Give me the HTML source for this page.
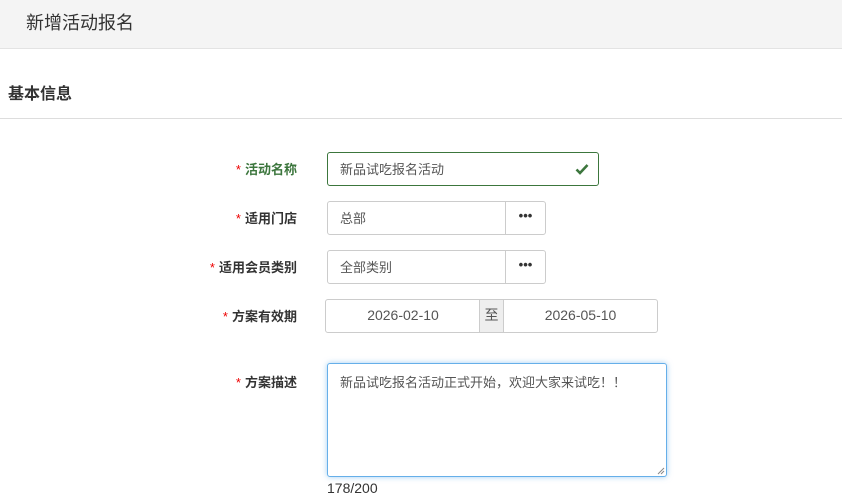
<!DOCTYPE html>
<html><head><meta charset="utf-8"><style>
*{box-sizing:border-box;margin:0;padding:0}
body{width:842px;height:491px;overflow:hidden;background:#fff;font-family:"Liberation Sans","Noto Sans CJK SC",sans-serif;color:#333;position:relative}
.hd{position:absolute;left:0;top:0;width:842px;height:49px;background:#f4f4f4;border-bottom:1px solid #e3e3e3}
.hd span{position:absolute;left:26px;top:9px;font-size:18px;color:#333}
.sec{position:absolute;left:8px;top:80px;font-size:16px;font-weight:bold;color:#333}
.line{position:absolute;left:0;top:118px;width:842px;height:1px;background:#ddd}
.lb{position:absolute;right:545px;font-size:13px;font-weight:bold;color:#333;white-space:nowrap}
.lb i{color:#e00;font-style:normal;font-weight:normal;margin-right:4px}
.box{position:absolute;border:1px solid #ccc;border-radius:3px;font-size:13px;color:#555;background:#fff}
.t{position:absolute;left:12px;top:6px}
.btn{position:absolute;right:0;top:0;bottom:0;width:40px;border-left:1px solid #ccc;text-align:center;font-weight:bold;font-size:13px;line-height:28px;color:#333}
</style></head><body>
<div class="hd"><span>新增活动报名</span></div>
<div class="sec">基本信息</div>
<div class="line"></div>

<div class="lb" style="top:159px;color:#3c763d"><i>*</i>活动名称</div>
<div class="box" style="left:327px;top:152px;width:272px;height:34px;border-color:#3c763d"><span class="t">新品试吃报名活动</span>
<svg style="position:absolute;right:9px;top:10px" width="14" height="12" viewBox="0 0 14 12"><path d="M1.5 6.5L5 10L12.5 2" stroke="#3c763d" stroke-width="2.6" fill="none"/></svg></div>

<div class="lb" style="top:208px"><i>*</i>适用门店</div>
<div class="box" style="left:327px;top:201px;width:219px;height:34px"><span class="t">总部</span><div class="btn">•••</div></div>

<div class="lb" style="top:257px"><i>*</i>适用会员类别</div>
<div class="box" style="left:327px;top:250px;width:219px;height:34px"><span class="t">全部类别</span><div class="btn">•••</div></div>

<div class="lb" style="top:306px;right:545px"><i>*</i>方案有效期</div>
<div class="box" style="left:325px;top:299px;width:333px;height:34px;overflow:hidden;font-size:14px">
<div style="position:absolute;left:0;width:154px;top:7px;text-align:center">2026-02-10</div>
<div style="position:absolute;left:153px;width:25px;top:0;bottom:0;background:#eee;border-left:1px solid #ccc;border-right:1px solid #ccc;text-align:center;line-height:31px">至</div>
<div style="position:absolute;left:178px;right:0;top:7px;text-align:center">2026-05-10</div>
</div>

<div class="lb" style="top:372px"><i>*</i>方案描述</div>
<div class="box" style="left:327px;top:363px;width:340px;height:114px;border-color:#66afe9;box-shadow:0 0 6px rgba(102,175,233,.6)"><span class="t" style="left:12px;top:8px">新品试吃报名活动正式开始，欢迎大家来试吃！！</span>
<svg style="position:absolute;right:1px;bottom:1px" width="8" height="8"><path d="M7 1L1 7M7 4L4 7" stroke="#888" stroke-width="1"/></svg></div>
<div style="position:absolute;left:327px;top:480px;font-size:14px;color:#333">178/200</div>
</body></html>
